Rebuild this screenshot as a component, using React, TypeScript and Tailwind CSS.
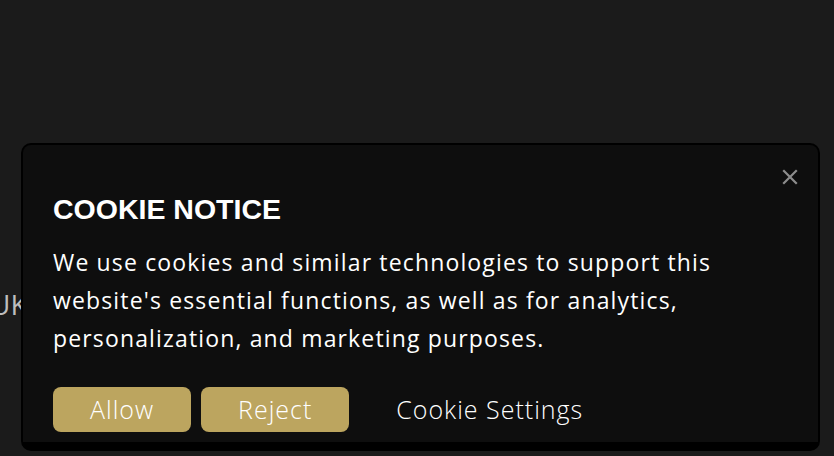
import React from "react";

export default function App() {
  const body = { fontFamily: '"Open Sans", "DejaVu Sans", sans-serif' };
  return (
    <div className="relative h-[456px] w-[834px] overflow-hidden bg-[#1b1b1b] pt-[143px] pl-[21px] pr-[14px]">
      <div
        className="absolute left-[-10px] top-[290px] text-[28px] leading-none text-[#bdbdbd]"
        style={body}
      >
        UK
      </div>
      <div className="relative rounded-[10px] bg-black px-[2px] pt-[2px] pb-[9px]">
        <div className="relative rounded-t-[8px] bg-[#0e0e0e] px-[30px] pt-[47px] pb-[10px]">
          <button className="absolute right-[20px] top-[24px] text-[#8c8c8c]" aria-label="Close">
            <svg width="16" height="16" viewBox="0 0 16 16" fill="none" stroke="currentColor" strokeWidth="2.2" strokeLinecap="square">
              <path d="M2 2 L14 14 M14 2 L2 14" />
            </svg>
          </button>
          <h2
            className="text-[28.5px] font-bold leading-[34px] text-white"
            style={{ fontFamily: '"Liberation Sans", Arial, sans-serif' }}
          >
            COOKIE NOTICE
          </h2>
          <p
            className="mt-[17px] whitespace-nowrap text-[23px] leading-[38px] tracking-[1.15px] text-white"
            style={body}
          >
            We use cookies and similar technologies to support this
            <br />
            website's essential functions, as well as for analytics,
            <br />
            personalization, and marketing purposes.
          </p>
          <div className="mt-[30px] flex gap-[10px]" style={body}>
            <button className="h-[45px] rounded-[8px] bg-[#bca55f] px-[37px] text-[25px] font-light tracking-[1px] text-white">
              Allow
            </button>
            <button className="h-[45px] rounded-[8px] bg-[#bca55f] px-[37px] text-[25px] font-light tracking-[1px] text-white">
              Reject
            </button>
            <button className="h-[45px] rounded-[8px] px-[37px] text-[25px] font-light tracking-[1px] text-white">
              Cookie Settings
            </button>
          </div>
        </div>
      </div>
    </div>
  );
}
